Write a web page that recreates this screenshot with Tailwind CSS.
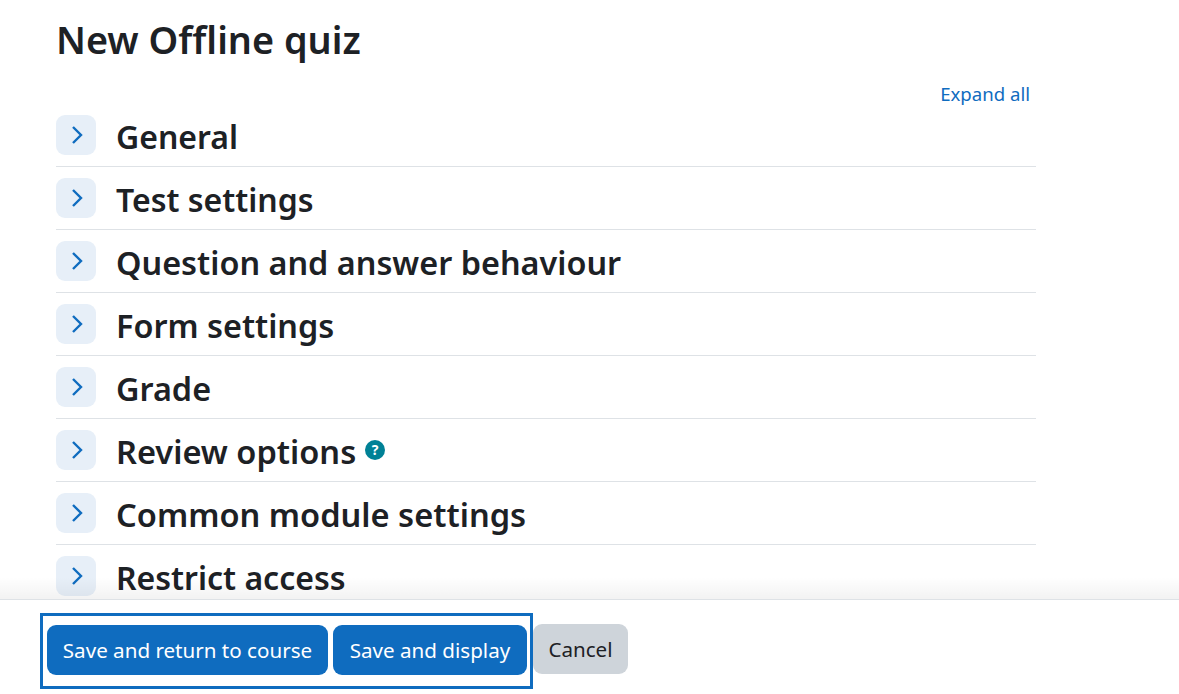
<!DOCTYPE html>
<html lang="en">
<head>
  <meta charset="UTF-8" />
  <title>New Offline quiz</title>
  <script src="https://cdn.jsdelivr.net/npm/@tailwindcss/browser@4"></script>
</head>
<body class="bg-white text-[#1d2125] font-['Noto_Sans',sans-serif]">
  <div class="h-[694px] flex flex-col overflow-hidden">
    <div class="relative h-[599px] overflow-hidden">
      <div class="pl-[56px] w-[1036px]">
        <h1 class="text-[37.8px] leading-[44px] font-semibold pt-[18px]">New Offline quiz</h1>
        <div class="flex justify-end pr-[6px] mt-[15px] h-[38px]">
          <a class="text-[#0f6cbf] text-[18.6px] leading-[34px]">Expand all</a>
        </div>

        <div class="h-[52px] flex items-start border-b border-[#dee2e6]">
          <span class="w-10 h-10 rounded-[9px] bg-[#e7eff8] flex items-center justify-center">
            <svg class="w-[14px] h-[20px]" viewBox="0 0 14 20" fill="none" stroke="#0f6cbf" stroke-width="2.4"><path d="M4 2l8 8-8 8" /></svg>
          </span>
          <h3 class="ml-5 text-[32px] leading-[44px] font-semibold">General</h3>
        </div>
        <div class="h-[63px] pt-[11px] flex items-start border-b border-[#dee2e6]">
          <span class="w-10 h-10 rounded-[9px] bg-[#e7eff8] flex items-center justify-center">
            <svg class="w-[14px] h-[20px]" viewBox="0 0 14 20" fill="none" stroke="#0f6cbf" stroke-width="2.4"><path d="M4 2l8 8-8 8" /></svg>
          </span>
          <h3 class="ml-5 text-[32px] leading-[44px] font-semibold">Test settings</h3>
        </div>
        <div class="h-[63px] pt-[11px] flex items-start border-b border-[#dee2e6]">
          <span class="w-10 h-10 rounded-[9px] bg-[#e7eff8] flex items-center justify-center">
            <svg class="w-[14px] h-[20px]" viewBox="0 0 14 20" fill="none" stroke="#0f6cbf" stroke-width="2.4"><path d="M4 2l8 8-8 8" /></svg>
          </span>
          <h3 class="ml-5 text-[32.4px] leading-[42px] font-semibold">Question and answer behaviour</h3>
        </div>
        <div class="h-[63px] pt-[11px] flex items-start border-b border-[#dee2e6]">
          <span class="w-10 h-10 rounded-[9px] bg-[#e7eff8] flex items-center justify-center">
            <svg class="w-[14px] h-[20px]" viewBox="0 0 14 20" fill="none" stroke="#0f6cbf" stroke-width="2.4"><path d="M4 2l8 8-8 8" /></svg>
          </span>
          <h3 class="ml-5 text-[32.4px] leading-[42px] font-semibold">Form settings</h3>
        </div>
        <div class="h-[63px] pt-[11px] flex items-start border-b border-[#dee2e6]">
          <span class="w-10 h-10 rounded-[9px] bg-[#e7eff8] flex items-center justify-center">
            <svg class="w-[14px] h-[20px]" viewBox="0 0 14 20" fill="none" stroke="#0f6cbf" stroke-width="2.4"><path d="M4 2l8 8-8 8" /></svg>
          </span>
          <h3 class="ml-5 text-[32.4px] leading-[42px] font-semibold">Grade</h3>
        </div>
        <div class="h-[63px] pt-[11px] flex items-start border-b border-[#dee2e6]">
          <span class="w-10 h-10 rounded-[9px] bg-[#e7eff8] flex items-center justify-center">
            <svg class="w-[14px] h-[20px]" viewBox="0 0 14 20" fill="none" stroke="#0f6cbf" stroke-width="2.4"><path d="M4 2l8 8-8 8" /></svg>
          </span>
          <h3 class="ml-5 text-[32.6px] leading-[44px] font-semibold">Review options</h3>
          <span class="ml-[9px] mt-[10px] w-5 h-5 rounded-full bg-[#008196] text-white text-[14px] leading-5 font-bold text-center">?</span>
        </div>
        <div class="h-[63px] pt-[11px] flex items-start border-b border-[#dee2e6]">
          <span class="w-10 h-10 rounded-[9px] bg-[#e7eff8] flex items-center justify-center">
            <svg class="w-[14px] h-[20px]" viewBox="0 0 14 20" fill="none" stroke="#0f6cbf" stroke-width="2.4"><path d="M4 2l8 8-8 8" /></svg>
          </span>
          <h3 class="ml-5 text-[32.6px] leading-[44px] font-semibold">Common module settings</h3>
        </div>
        <div class="h-[63px] pt-[11px] flex items-start">
          <span class="w-10 h-10 rounded-[9px] bg-[#e7eff8] flex items-center justify-center">
            <svg class="w-[14px] h-[20px]" viewBox="0 0 14 20" fill="none" stroke="#0f6cbf" stroke-width="2.4"><path d="M4 2l8 8-8 8" /></svg>
          </span>
          <h3 class="ml-5 text-[32px] leading-[44px] font-semibold">Restrict access</h3>
        </div>
      </div>
      <div class="absolute bottom-0 left-0 right-0 h-[22px] bg-gradient-to-b from-white/0 to-black/5"></div>
    </div>

    <div class="flex-1 border-t border-[#dee2e6] bg-white pl-[40px] pt-[13px] flex items-start">
      <div class="border-[3px] border-[#0f6cbf] h-[76px] pl-[4px] pr-[3px] pt-[9px] flex gap-[5px]">
        <button class="h-[50px] w-[281px] rounded-[9px] bg-[#0f6cbf] text-white text-[20.6px]">Save and return to course</button>
        <button class="h-[50px] w-[194px] rounded-[9px] bg-[#0f6cbf] text-white text-[20.6px]">Save and display</button>
      </div>
      <button class="h-[50px] w-[95px] mt-[11px] rounded-[9px] bg-[#ced4da] text-[#1d2125] text-[20.6px]">Cancel</button>
    </div>
  </div>
</body>
</html>
